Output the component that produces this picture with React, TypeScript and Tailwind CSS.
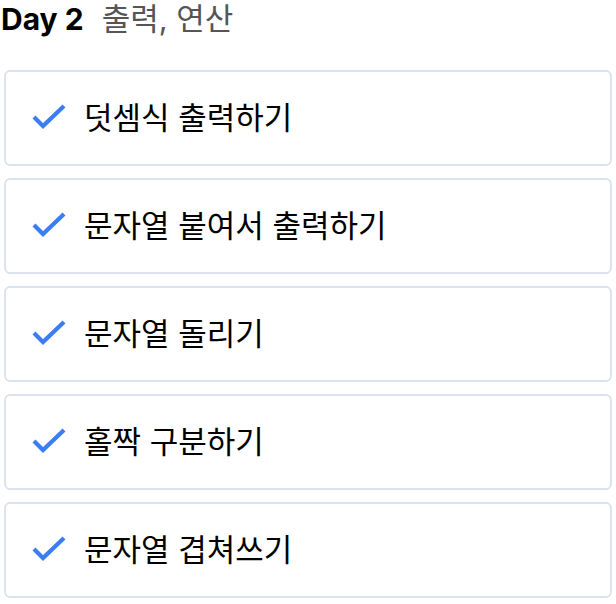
import React from "react";

const items = ["덧셈식 출력하기", "문자열 붙여서 출력하기", "문자열 돌리기", "홀짝 구분하기", "문자열 겹쳐쓰기"];

function Check() {
  return (
    <svg width="36" height="28" viewBox="0 0 36 28" className="shrink-0">
      <path d="M2 13 L11 22 L32 2" fill="none" stroke="#3b7ef3" strokeWidth="4.2" strokeLinecap="butt" strokeLinejoin="miter" />
    </svg>
  );
}

export default function App() {
  return (
    <div className="w-[616px] h-[604px] bg-white" style={{ fontFamily: 'Inter, "Noto Sans CJK KR", sans-serif' }}>
      <div className="flex items-baseline h-[70px] pl-[1px]">
        <span className="text-[30px] font-bold text-black leading-[38px] tracking-[0px]">Day 2</span>
        <span className="text-[31px] text-[#555555] leading-[38px] ml-[18px]">출력, 연산</span>
      </div>
      <div className="flex flex-col gap-3 px-1">
        {items.map((t) => (
          <div key={t} className="h-[96px] border-2 border-[#dbe3ec] rounded-md flex items-center pl-[26px]">
            <Check />
            <span className="ml-[16px] text-[31px] text-black leading-none -mt-[2px]">{t}</span>
          </div>
        ))}
      </div>
    </div>
  );
}
